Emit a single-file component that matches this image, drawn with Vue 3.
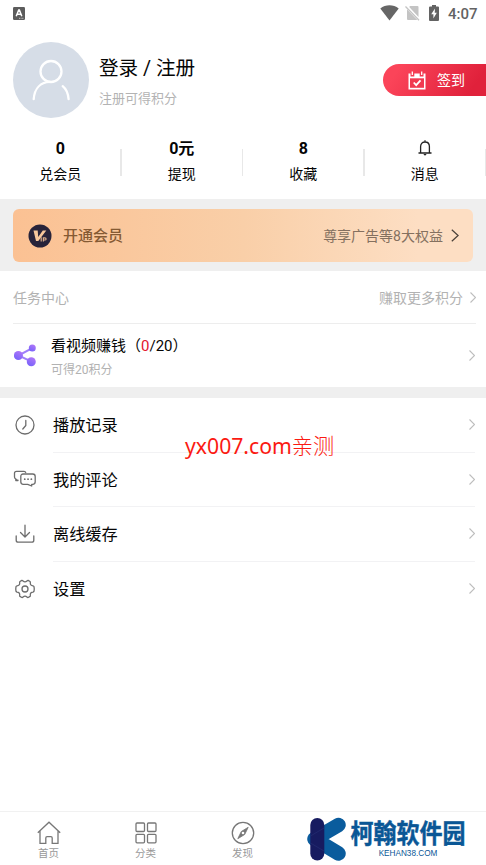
<script setup>
const stats = [
  { value: '0', label: '兑会员' },
  { value: '0元', label: '提现' },
  { value: '8', label: '收藏' },
  { value: '', label: '消息' },
]
const menu = [
  { icon: 'clock', label: '播放记录' },
  { icon: 'chat', label: '我的评论' },
  { icon: 'download', label: '离线缓存' },
  { icon: 'gear', label: '设置' },
]
</script>

<template>
  <div class="page">
    <header class="status">
      <svg class="ime" width="12" height="13" viewBox="0 0 12 13">
        <rect width="12" height="13" rx="1.2" fill="#5c5c5c" />
        <path d="M3.2 9.2 5.7 3h.7l2.4 6.2M4.3 7.2h3.5" fill="none" stroke="#fff" stroke-width="1.5" />
        <path d="M6 11.3h5" stroke="#ddd" stroke-width=".8" stroke-dasharray="1 .6" />
      </svg>
      <div class="status-right">
        <svg width="19" height="16" viewBox="0 0 19 16"><path d="M.3 3.5C5.5-.8 13.5-.8 18.7 3.5L9.5 15.5Z" fill="#666" /></svg>
        <svg class="sim" width="15" height="16" viewBox="0 0 15 16">
          <path d="M5 1h7.5q1 0 1 1v10L4.2 2ZM2 4.2 12.3 15H3q-1 0-1-1Z" fill="#c4c4c4" />
          <path d="M.5 1.5 14 15.3" stroke="#c4c4c4" stroke-width="1.3" />
        </svg>
        <svg class="battery" width="10" height="16" viewBox="0 0 10 16">
          <path d="M3 0h4v1.500h2q1 0 1 1V15q0 1-1 1H1q-1 0-1-1V2.500q0-1 1-1h2Z" fill="#636363" />
          <path d="M6 3.500 2.200 9.200h2.200V13.500L7.800 7.700H5.700Z" fill="#fff" />
        </svg>
        <span class="time">4:07</span>
      </div>
    </header>

    <section class="profile">
      <div class="avatar">
        <svg width="76" height="76" viewBox="0 0 76 76" fill="none" stroke="#fff" stroke-width="2.300" stroke-linecap="round">
          <circle cx="38" cy="29.500" r="10.500" />
          <path d="M20.700 57.200C21.500 46 28 40.200 37 39.900M49.700 44.200C53.500 47.300 55.200 52 55.600 57.200" />
        </svg>
      </div>
      <div class="who">
        <div class="login">登录 / 注册</div>
        <div class="hint">注册可得积分</div>
      </div>
      <div class="sign">
        <svg width="18" height="19" viewBox="0 0 18 19">
          <path d="M.5 2.500h2v3h3.800v-3h5.400v3h3.800v-3h2V18.500H.5Z" fill="#fff" />
          <rect x="2" y="7.300" width="14" height="9.500" fill="#f13a50" />
          <path d="M4.300.5v3.500M13.700.5v3.500" stroke="#fff" stroke-width="1.300" />
          <path d="m5.700 11.500 2.500 2.600 4.300-4.700" fill="none" stroke="#fff" stroke-width="1.800" />
        </svg>
        <span>签到</span>
      </div>
    </section>

    <section class="stats">
      <div v-for="s in stats" :key="s.label" class="stat">
        <div class="value">
          <template v-if="s.value">{{ s.value }}</template>
          <svg v-else class="bell" width="14" height="16" viewBox="0 0 14 16" fill="none" stroke="#222" stroke-width="1.300">
            <path d="M.5 13h13M2.600 13V6.500C2.600 3.800 4.500 2 7 2s4.400 1.800 4.400 4.500V13M7 .2V2" />
            <path d="M5.300 14h3.400L7 15.700Z" fill="#222" stroke="none" />
          </svg>
        </div>
        <div class="label">{{ s.label }}</div>
      </div>
    </section>

    <section class="vip-wrap">
      <div class="vip">
        <svg width="24" height="24" viewBox="0 0 24 24">
          <circle cx="12" cy="12" r="11.500" fill="#27233a" />
          <path d="M5.500 6.500h4.200l.5 6.500 4.600-6.500h3.500L10.300 17H8Z" fill="#f6c79c" />
          <path d="M13.200 17.500v-4.300M15.400 17.500v-3.700h1.400q1.300 0 1.300 1.100t-1.300 1.100h-1.400" fill="none" stroke="#d9ad8b" stroke-width="1.200" />
        </svg>
        <span class="vip-title">开通会员</span>
        <span class="vip-desc">尊享广告等8大权益</span>
        <svg class="vip-arrow" width="8" height="13" viewBox="0 0 8 13"><path d="m.8.7 6.300 5.800L.8 12.300" fill="none" stroke="#4a4039" stroke-width="1.200" /></svg>
      </div>
    </section>

    <section class="tasks">
      <div class="task-head">
        <span class="task-name">任务中心</span>
        <span class="more">赚取更多积分</span>
        <svg class="arrow" width="6" height="11" viewBox="0 0 6 11"><path d="m.5.500 5 5-5 5" /></svg>
      </div>
      <div class="task">
        <svg width="23" height="24" viewBox="0 0 23 24">
          <defs><linearGradient id="share" x1="1" y1="0" x2=".5" y2="1"><stop stop-color="#b779f8" /><stop offset="1" stop-color="#7b64fa" /></linearGradient></defs>
          <path d="M18.200 4.200 4.500 11.500l13 6.200" fill="none" stroke="#a080fa" stroke-width="2" />
          <g fill="url(#share)"><circle cx="18.300" cy="4" r="3.500" /><circle cx="4.400" cy="11.500" r="4.500" /><circle cx="17.300" cy="17.700" r="4.500" /></g>
        </svg>
        <div class="task-text">
          <div class="task-title">看视频赚钱（<b>0</b>/20）</div>
          <div class="task-sub">可得20积分</div>
        </div>
        <svg class="arrow" width="6" height="11" viewBox="0 0 6 11"><path d="m.5.500 5 5-5 5" /></svg>
      </div>
    </section>

    <section class="menu">
      <div v-for="m in menu" :key="m.icon" class="row">
        <svg class="row-icon" width="24" height="24" viewBox="0 0 24 24" fill="none" stroke="#6d6d6d" stroke-width="1.300" stroke-linecap="round" stroke-linejoin="round">
          <template v-if="m.icon === 'clock'"><circle cx="12" cy="12" r="9" /><path d="M12.800 7.500v5l-3 3.500" /></template>
          <template v-else-if="m.icon === 'chat'">
            <path d="M5 12.200H3.800L2.800 11Q1.500 10.500 1.500 9V5.300Q1.500 3.300 3.500 3.300H11Q12.500 3.300 12.700 4.500M2.800 11v1.500H5" />
            <path d="M10.300 6h9.400q2.500 0 2.500 2.500v5.300q0 2.500-2.500 2.500h-1v1.700l-4-1.700h-4.400q-2.500 0-2.500-2.500V8.500Q7.800 6 10.300 6Z" />
            <path d="M11.700 11.200h.1M15 11.200h.1M18.300 11.200h.1" stroke-width="1.700" />
          </template>
          <path v-else-if="m.icon === 'download'" d="M12 3.200v11.500M7.500 10.500l4.500 4.500 4.500-4.500M3.200 14v4.200q0 2 2 2h13.600q2 0 2-2V14" />
          <template v-else>
            <circle cx="12" cy="12" r="3" />
            <path d="M7 4.500 8.800 3.400Q9.500 3.200 10 4 12 5.700 14 4q.5-.8 1.200-.6L17 4.500q.6.500.3 1.300-.3 2.700 2.700 3 .8.100 1 .8.500 2.300 0 4.700-.2.700-1 .9-3 .2-2.700 3 .3.800-.3 1.200l-1.800 1.100q-.7.200-1.200-.5-2-1.700-4 0-.5.700-1.200.5L7 19.400q-.6-.4-.3-1.200.3-2.800-2.700-3-.8-.2-1-.9-.5-2.400 0-4.700.2-.7 1-.8 3-.3 2.700-3-.3-.8.300-1.300Z" />
          </template>
        </svg>
        <div class="row-body"><span>{{ m.label }}</span><svg class="arrow" width="6" height="11" viewBox="0 0 6 11"><path d="m.5.500 5 5-5 5" /></svg></div>
      </div>
      <div class="watermark">yx007.com<span>亲测</span></div>
    </section>

    <nav class="tabs">
      <div class="tab">
        <svg width="24" height="24" viewBox="0 0 24 24"><path d="M.8 11.700 12 1.200l11.200 10.500M3 10v12.300h5.800V17q0-1.300 1.300-1.300h3.800q1.300 0 1.300 1.300v5.300H21V10" /></svg>
        <span>首页</span>
      </div>
      <div class="tab">
        <svg width="24" height="24" viewBox="0 0 24 24"><rect x="2" y="2" width="8.500" height="8.500" rx="1" /><rect x="13.500" y="2" width="8.500" height="8.500" rx="1" /><rect x="2" y="13.300" width="8.500" height="8.500" rx="1" /><rect x="13.500" y="13.300" width="8.500" height="8.500" rx="1" /></svg>
        <span>分类</span>
      </div>
      <div class="tab">
        <svg width="24" height="24" viewBox="0 0 24 24"><circle cx="12" cy="12" r="10.700" /><path d="M17.200 6.300 13.700 13.500 6.800 17.700 10.300 10.500Z" fill="#777" stroke-width=".8" /><circle cx="12" cy="12" r="1.300" fill="#fff" stroke="none" /></svg>
        <span>发现</span>
      </div>
      <div class="brand">
        <svg width="40" height="44" viewBox="0 0 40 44">
          <path d="M7.500 22 31.500 8M7.500 22 31.500 36.500" stroke="#0a5c9d" stroke-width="14.500" stroke-linecap="round" stroke-linejoin="round" />
          <path d="M10.300 8v28.500" stroke="#171b60" stroke-width="14" stroke-linecap="round" />
          <path d="M3.500 19 17 11M3.500 26l13.500 8" stroke="#273176" stroke-width=".6" />
        </svg>
        <div class="brand-text">
          <div class="brand-name">柯翰软件园</div>
          <div class="brand-url">KEHAN38.COM</div>
        </div>
      </div>
    </nav>
  </div>
</template>

<style>
body { margin: 0; background: #fff; }
</style>

<style scoped>
* { box-sizing: border-box; }
svg { display: block; flex: none; }
.page { width: 486px; height: 865px; overflow: hidden; display: flex; flex-direction: column; background: #fff; color: #050505; font-family: Roboto, "Noto Sans CJK SC", sans-serif; white-space: nowrap; }
.status { height: 28px; display: flex; justify-content: space-between; padding: 5px 8px 0 13px; }
.ime { margin-top: 2px; }
.status-right { display: flex; }
.sim { margin-left: 6px; }
.battery { margin-left: 9px; }
.time { width: 30px; margin-left: 9px; font-size: 15px; font-weight: 500; line-height: 18px; color: #636363; }
.profile { height: 102px; display: flex; align-items: flex-start; padding: 14px 0 0 13px; }
.avatar { width: 76px; height: 76px; border-radius: 50%; background: #d6dde7; }
.who { margin-left: 10px; padding-top: 12px; flex: 1; }
.login { font-size: 19.600px; line-height: 30px; }
.hint { margin-top: 5px; font-size: 13px; line-height: 20px; color: #b3b3b3; }
.sign { width: 103px; height: 32px; margin-top: 22px; padding-left: 25px; display: flex; align-items: center; border-radius: 16px 0 0 16px; background: linear-gradient(125deg, #fb4459 15%, #e0213b 85%); color: #fff; font-size: 14px; }
.sign span { margin-left: 11px; padding-bottom: 2px; }
.stats { height: 69px; display: grid; grid-template-columns: repeat(4, 1fr); padding-top: 8px; }
.stat { position: relative; text-align: center; padding-right: 1px; }
.stat::after { content: ""; position: absolute; right: 0; top: 11px; width: 1.500px; height: 27px; background: #e8e8e8; }
.value { height: 22px; line-height: 22px; font-size: 16px; font-weight: 700; display: flex; align-items: center; justify-content: center; }
.bell { margin-top: -3px; }
.label { margin-top: 4px; font-size: 14px; line-height: 21px; }
.vip-wrap { height: 72px; padding: 10px 13px 0; background: #efefef; }
.vip { height: 53px; display: flex; align-items: center; padding: 0 14px 0 15px; border-radius: 6px; background: linear-gradient(90deg, #fbc193, #f9cfa8 50%, #fddec3 88%); }
.vip-title { margin-left: 11px; padding-bottom: 2px; font-size: 15px; font-weight: 500; color: #855a33; }
.vip-desc { margin-left: auto; padding-bottom: 2px; font-size: 14px; color: #84705f; }
.vip-arrow { margin-left: 8px; }
.tasks { height: 127px; border-bottom: 11px solid #efefef; }
.task-head { height: 53px; margin: 0 10px 0 13px; display: flex; align-items: center; border-bottom: 1px solid #ededed; font-size: 14px; color: #b2b2b2; }
.task-name { padding-bottom: 1px; }
.more { margin-left: auto; margin-right: 7px; padding-bottom: 1px; }
.arrow { fill: none; stroke: #bdbdbd; stroke-width: 1.100; }
.task { height: 63px; display: flex; align-items: center; padding: 0 11px 0 14px; }
.task-text { margin-left: 14px; padding-top: 2px; flex: 1; }
.task-title { font-size: 15px; line-height: 24px; }
.task-title b { font-weight: 400; color: #e2152f; }
.task-sub { margin-top: 2px; font-size: 12px; line-height: 20px; color: #b2b2b2; }
.menu { position: relative; flex: 1; }
.row { height: 54.600px; display: flex; align-items: center; padding: 0 11px 0 13px; font-size: 16.200px; }
.row-body { flex: 1; height: 100%; margin-left: 16px; display: flex; align-items: center; justify-content: space-between; border-bottom: 1px solid #f2f2f4; }
.row-body span { padding-bottom: 1px; }
.row:nth-child(4) .row-body { border-bottom-color: transparent; }
.watermark { position: absolute; left: 185px; top: 33px; font: 400 21.200px/30px "Noto Sans", "Noto Sans CJK SC", sans-serif; color: #fb1a12; }
.watermark span { font-weight: 300; }
.tabs { height: 54px; display: flex; border-top: 1px solid #f1f1f1; }
.tab { width: 97px; display: flex; flex-direction: column; align-items: center; padding-top: 9px; font-size: 10.500px; line-height: 14px; color: #999; }
.tab svg { fill: none; stroke: #777; stroke-width: 1.300; }
.tab span { margin-top: 2px; }
.brand { margin-left: 16px; padding-top: 5px; display: flex; }
.brand-text { margin-left: 3px; width: 116px; text-align: center; }
.brand-name { height: 33px; line-height: 36px; font-size: 23px; font-weight: 700; color: #0a5796; -webkit-text-stroke: .4px #0a5796; transform: scaleY(1.120); }
.brand-url { font: 8.200px/8px "Liberation Sans", sans-serif; color: #0a5796; }
</style>
